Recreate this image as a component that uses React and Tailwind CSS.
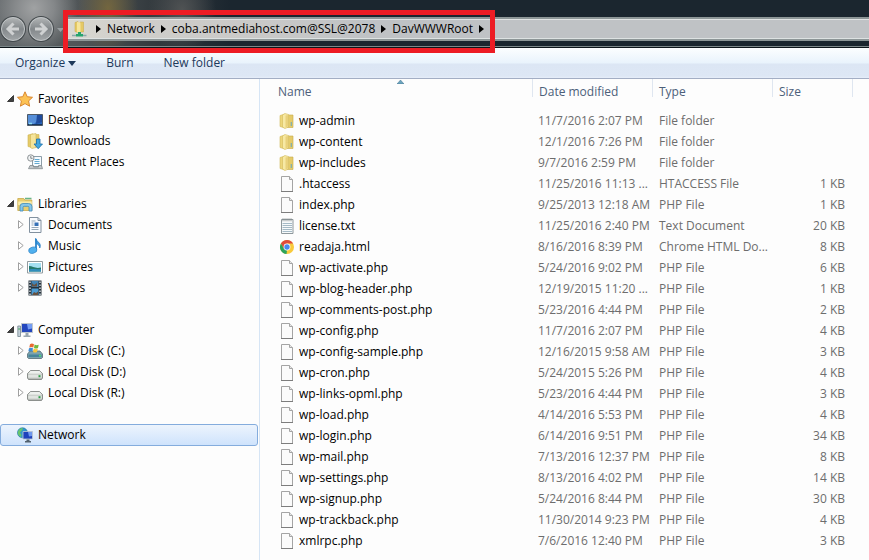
import { useState } from 'react';

const FILES = [
  { name: 'wp-admin', icon: 'folder', date: '11/7/2016 2:07 PM', type: 'File folder', size: '' },
  { name: 'wp-content', icon: 'folder', date: '12/1/2016 7:26 PM', type: 'File folder', size: '' },
  { name: 'wp-includes', icon: 'folder', date: '9/7/2016 2:59 PM', type: 'File folder', size: '' },
  { name: '.htaccess', icon: 'file', date: '11/25/2016 11:13 ...', type: 'HTACCESS File', size: '1 KB' },
  { name: 'index.php', icon: 'file', date: '9/25/2013 12:18 AM', type: 'PHP File', size: '1 KB' },
  { name: 'license.txt', icon: 'text', date: '11/25/2016 2:40 PM', type: 'Text Document', size: '20 KB' },
  { name: 'readaja.html', icon: 'chrome', date: '8/16/2016 8:39 PM', type: 'Chrome HTML Do...', size: '8 KB' },
  { name: 'wp-activate.php', icon: 'file', date: '5/24/2016 9:02 PM', type: 'PHP File', size: '6 KB' },
  { name: 'wp-blog-header.php', icon: 'file', date: '12/19/2015 11:20 ...', type: 'PHP File', size: '1 KB' },
  { name: 'wp-comments-post.php', icon: 'file', date: '5/23/2016 4:44 PM', type: 'PHP File', size: '2 KB' },
  { name: 'wp-config.php', icon: 'file', date: '11/7/2016 2:07 PM', type: 'PHP File', size: '4 KB' },
  { name: 'wp-config-sample.php', icon: 'file', date: '12/16/2015 9:58 AM', type: 'PHP File', size: '3 KB' },
  { name: 'wp-cron.php', icon: 'file', date: '5/24/2015 5:26 PM', type: 'PHP File', size: '4 KB' },
  { name: 'wp-links-opml.php', icon: 'file', date: '5/23/2016 4:44 PM', type: 'PHP File', size: '3 KB' },
  { name: 'wp-load.php', icon: 'file', date: '4/14/2016 5:53 PM', type: 'PHP File', size: '4 KB' },
  { name: 'wp-login.php', icon: 'file', date: '6/14/2016 9:51 PM', type: 'PHP File', size: '34 KB' },
  { name: 'wp-mail.php', icon: 'file', date: '7/13/2016 12:37 PM', type: 'PHP File', size: '8 KB' },
  { name: 'wp-settings.php', icon: 'file', date: '8/13/2016 4:02 PM', type: 'PHP File', size: '14 KB' },
  { name: 'wp-signup.php', icon: 'file', date: '5/24/2016 8:44 PM', type: 'PHP File', size: '30 KB' },
  { name: 'wp-trackback.php', icon: 'file', date: '11/30/2014 9:23 PM', type: 'PHP File', size: '4 KB' },
  { name: 'xmlrpc.php', icon: 'file', date: '7/6/2016 12:40 PM', type: 'PHP File', size: '3 KB' },
];

const TREE = [
  {
    label: 'Favorites',
    icon: 'star',
    children: [
      { label: 'Desktop', icon: 'desktop' },
      { label: 'Downloads', icon: 'downloads' },
      { label: 'Recent Places', icon: 'recent' },
    ],
  },
  {
    label: 'Libraries',
    icon: 'libraries',
    children: [
      { label: 'Documents', icon: 'documents', arrow: true },
      { label: 'Music', icon: 'music', arrow: true },
      { label: 'Pictures', icon: 'pictures', arrow: true },
      { label: 'Videos', icon: 'videos', arrow: true },
    ],
  },
  {
    label: 'Computer',
    icon: 'computer',
    children: [
      { label: 'Local Disk (C:)', icon: 'system', arrow: true },
      { label: 'Local Disk (D:)', icon: 'disk', arrow: true },
      { label: 'Local Disk (R:)', icon: 'disk', arrow: true },
    ],
  },
];

const CRUMBS = ['Network', 'coba.antmediahost.com@SSL@2078', 'DavWWWRoot'];

export default function App() {
  const [selected, setSelected] = useState('Network');

  return (
    <div className="flex flex-col min-h-screen bg-[#fdfdfd] font-['Open_Sans','Noto_Sans',sans-serif] text-xs text-black">
      <AddressBar />

      {/* Command bar */}
      <div className="flex items-center h-[31px] pl-[15px] gap-[30px] text-[#1e395b] border-b border-[#a3aec4] bg-[linear-gradient(#fcfeff_0px,#e9f3fc_15px,#dce6f4_16px,#dde7f5_28px,#e6eef9_30px)]">
        <button type="button" className="flex items-center gap-[3px]">
          Organize
          <svg className="w-2 h-[5px]" viewBox="0 0 8 5"><path d="M0 0h8L4 5z" fill="#1e395b" /></svg>
        </button>
        <button type="button">Burn</button>
        <button type="button">New folder</button>
      </div>

      <div className="flex flex-1">
        {/* Navigation pane */}
        <nav className="flex flex-col gap-[21px] w-[260px] shrink-0 pt-[9px] border-r border-[#d6e5f5]">
          {TREE.map(group => (
            <div key={group.label}>
              <button type="button" className="flex items-center w-full h-[21px] pl-[7px]">
                <svg className="w-[7px] h-[7px] mr-[3px]" viewBox="0 0 7 7"><path d="M6.5.5v6H.5z" fill="#404040" stroke="#222" strokeWidth=".8" /></svg>
                <Icon name={group.icon} />
                <span className="ml-[5px]">{group.label}</span>
              </button>
              {group.children.map(item => (
                <button key={item.label} type="button" className="flex items-center w-full h-[21px] pl-[18px]">
                  <span className="w-[9px]">
                    {item.arrow && (
                      <svg className="w-[6px] h-[9px]" viewBox="0 0 6 9"><path d="M.5.7v7.6L5.2 4.5z" fill="#fff" stroke="#a0a0a0" /></svg>
                    )}
                  </span>
                  <Icon name={item.icon} />
                  <span className="ml-[5px]">{item.label}</span>
                </button>
              ))}
            </div>
          ))}
          <button
            type="button"
            onClick={() => setSelected('Network')}
            className={`flex items-center h-[22px] mr-px pl-4 rounded-[3px] border ${
              selected === 'Network' ? 'border-[#84acdd] bg-linear-to-b from-[#edf4fd] to-[#cfe3fc]' : 'border-transparent'
            }`}
          >
            <Icon name="network" />
            <span className="ml-[5px]">Network</span>
          </button>
        </nav>

        {/* File list */}
        <main className="flex-1 min-w-0">
          <table className="w-full table-fixed border-collapse text-left whitespace-nowrap">
            <colgroup>
              <col />
              <col className="w-[120px]" />
              <col className="w-[120px]" />
              <col className="w-[80px]" />
              <col className="w-4" />
            </colgroup>
            <thead>
              <tr className="h-[31px] text-[#4c607a] align-top">
                <HeadCell label="Name" className="pl-[18px]" sorted />
                <HeadCell label="Date modified" className="pl-[6px]" />
                <HeadCell label="Type" className="pl-[6px]" />
                <HeadCell label="Size" className="pl-[6px]" />
                <td />
              </tr>
            </thead>
            <tbody>
              {FILES.map(file => (
                <tr key={file.name} className="h-[21px] text-[#6d6d6d]">
                  <td className="p-0 pl-[19px]">
                    <div className="flex items-center gap-1 text-black">
                      <Icon name={file.icon} />
                      {file.name}
                    </div>
                  </td>
                  <td className="p-0 pl-[5px]">{file.date}</td>
                  <td className="p-0 pl-[6px]">{file.type}</td>
                  <td className="p-0 pr-2 text-right">{file.size}</td>
                  <td />
                </tr>
              ))}
            </tbody>
          </table>
        </main>
      </div>
    </div>
  );
}

function AddressBar() {
  return (
    <header className="h-12 pl-px pt-[17px] flex items-start bg-[#1b262f] bg-[radial-gradient(ellipse_44px_44px_at_34px_8px,#a0a2a3_0%,#85888a_45%,transparent_100%),radial-gradient(ellipse_30px_44px_at_108px_8px,#73663f_0%,transparent_100%),radial-gradient(ellipse_34px_44px_at_182px_10px,#505354_0%,transparent_100%),linear-gradient(90deg,#62676a_0px,#505557_80px,#343b3f_150px,#1b262f_230px)] border-b border-[#0d151b] shadow-[inset_0_-1px_#7c8789]">
      <NavButton label="Back" d="M9.500 3.500 4 9l5.500 5.500M4.500 9H15" />
      <div className="w-1" />
      <NavButton label="Forward" d="M8.500 3.500 14 9l-5.500 5.500M13.500 9H3" />
      <svg className="w-[7px] h-[4px] ml-[4px] mt-[11px]" viewBox="0 0 7 4"><path d="M0 0h7L3.500 4z" fill="#999fa2" /></svg>
      <div className="relative flex-1 ml-[4px]">
        <div className="flex items-center h-6 pl-[3px] border-y-2 border-[#8d9697] bg-[linear-gradient(90deg,#dad9d2_0px,#cfceca_60px,#c9c9c8_200px,#bfc2c5_300px)] shadow-[inset_0_1px_#e0e3e3,inset_0_-1px_#dde2e2]">
          <span className="mr-[3px]">
            <Icon name="share" />
          </span>
          {CRUMBS.map(crumb => (
            <div key={crumb} className="flex items-center">
              <CrumbArrow />
              <button type="button">{crumb}</button>
            </div>
          ))}
          <CrumbArrow />
        </div>
        {/* Callout around the path */}
        <div className="absolute -left-[5px] -top-[7px] w-[432px] h-[43px] border-[5px] border-[#ed1c24] pointer-events-none" />
      </div>
    </header>
  );
}

function CrumbArrow() {
  return (
    <svg className="w-[5px] h-2 mx-[6px]" viewBox="0 0 5 8"><path d="M0 0v8l5-4z" fill="#000" /></svg>
  );
}

function NavButton({ label, d }) {
  return (
    <button type="button" aria-label={label} className="w-6 h-6 rounded-full border border-[#c2c6c8] bg-linear-to-b from-[#b0b3b4] via-[#83888b] to-[#a0a4a6] shadow-[0_0_0_1px_#43494c]">
      <svg className="w-[22px] h-[22px] p-[2px]" viewBox="0 0 18 18" fill="none" stroke="#cfd1d2" strokeWidth="3"><path d={d} /></svg>
    </button>
  );
}

function HeadCell({ label, className, sorted }) {
  return (
    <th className={`relative p-0 font-normal ${className}`}>
      <div className="pt-[4px] leading-[18px] border-r border-[#dfe6f0] h-[18px]">{label}</div>
      {sorted && (
        <svg className="absolute left-1/2 top-[1px] w-[7px] h-[4px]" viewBox="0 0 7 4"><path d="M0 4h7L3.500 0z" fill="#6ba4bd" stroke="#3c6f8c" strokeWidth=".5" /></svg>
      )}
    </th>
  );
}

function Icon({ name }) {
  return (
    <svg className="block w-4 h-4 shrink-0" viewBox="0 0 16 16" fill="none" aria-hidden="true">
      {ICONS[name]}
    </svg>
  );
}

const ICONS = {
  folder: (
    <>
      <path d="M1 2.500 6 1v14l-5-1.500z" fill="#edd67b" stroke="#d2b957" strokeWidth=".6" />
      <path d="M9 2h5v12.500H8z" fill="#e5cb6a" stroke="#c6ab4b" strokeWidth=".6" />
      <path d="M3.500 2 6 .5l3.500 1V14L6 15.500 3.500 14z" fill="#f7e9a4" stroke="#d3ba5d" strokeWidth=".6" />
      <path d="M6.500 2.500v12l2.500-1V2z" fill="#e9d17b" />
      <path d="M12.300 9v4" stroke="#79aeb4" strokeWidth="1.200" />
    </>
  ),
  file: (
    <>
      <path d="M2.500.5h8l3 3v12h-11z" fill="#fbfbfb" stroke="#a4a4a4" />
      <path d="M10.500.5v3h3" fill="#e8e8e8" stroke="#a4a4a4" />
      <path d="M2 15.500h12" stroke="#7d7d7d" />
    </>
  ),
  text: (
    <>
      <path d="M2.500 1.500h11.500v14H2.500z" fill="#f7fafb" stroke="#8e989c" />
      <path d="M4 .3v3M6 .3v3M8 .3v3M10 .3v3M12 .3v3" stroke="#7d8588" strokeWidth=".8" />
      <path d="M3.500 5.500h9.500M3.500 7.500h9.500M3.500 9.500h9.500M3.500 11.500h9.500M3.500 13.500h9.500" stroke="#a5bac6" />
    </>
  ),
  chrome: (
    <>
      <circle cx="8" cy="8" r="7" fill="#f9ca3b" />
      <path d="M1.900 4.500A7 7 0 0 1 14.100 4.500H8L5 9.700z" fill="#df4b3b" />
      <path d="M1.900 4.500 5 9.700 8 11.500 7.500 15A7 7 0 0 1 1.900 4.500" fill="#2ca35b" />
      <circle cx="8" cy="8" r="3.400" fill="#fff" />
      <circle cx="8" cy="8" r="2.700" fill="#4989ed" />
    </>
  ),
  star: (
    <path d="m8 .8 2.200 4.900 5.300.6-3.900 3.600 1 5.300L8 12.600l-4.600 2.600 1-5.300L.5 6.300l5.300-.6z" fill="#fcc254" stroke="#d9862f" strokeLinejoin="round" />
  ),
  desktop: (
    <>
      <path d="M.5 2.500h15v11H.5z" fill="#2865ba" stroke="#4d5966" />
      <path d="M1 3h14v1.500L7 12H1z" fill="#568fd9" />
      <path d="M10 3h5v7L9 12z" fill="#204c9d" />
      <path d="M1 12.500h14" stroke="#17365f" />
      <path d="M2 11.500h3" stroke="#8ddcf0" strokeWidth="1.500" />
    </>
  ),
  downloads: (
    <>
      <path d="M1 2 6 .8v14L1 13.500zM8 1.500h4V14H8z" fill="#e6cb68" stroke="#cdb351" strokeWidth=".6" />
      <path d="M3.500 1.500 9 .5v14l-4 1-1.500-1z" fill="#f5e49a" stroke="#cfb658" strokeWidth=".6" />
      <path d="M9.500 6h3.500v5h2.500L11.200 15.700 7 11h2.500z" fill="#43a7df" stroke="#1a6da8" strokeWidth=".8" />
    </>
  ),
  recent: (
    <>
      <path d="M5.500 2.500h9v10h-9z" fill="#f5fbff" stroke="#8c9da8" />
      <path d="M7.500 5.500h5M7.500 7.500h5M7.500 9.500h5" stroke="#62a9d1" />
      <path d="m3 11.500-1.500 3.200h14l-1-3.200h-3v1.500h-5v-1.500z" fill="#c2c7ca" stroke="#838a8e" strokeWidth=".8" />
      <circle cx="3.800" cy="4" r="3.200" fill="#f1f3f4" stroke="#8d9295" />
      <path d="M3.800 2v2.300h1.800" stroke="#626b70" strokeWidth=".8" />
    </>
  ),
  libraries: (
    <>
      <path d="M.8 2.500h6l1 1.500h7v10.500H.8z" fill="#e9ce70" stroke="#c9a94a" strokeWidth=".8" />
      <path d="M8 2.500h6.500" stroke="#68b487" strokeWidth="1.500" />
      <path d="M1.200 5.500h13.500V9H1.200z" fill="#f9ecab" />
      <path d="M3 15V10.500Q3 7.500 6 7.500h5.500q3.500 0 3.500 3V15h-3v-3.500q0-1.200-1.200-1.200H7.200Q6 10.300 6 11.500V15z" fill="#86c7eb" stroke="#4089b6" strokeWidth=".8" />
    </>
  ),
  documents: (
    <>
      <path d="M2.500.5h8.500l3 3v12H2.500z" fill="#f9fcff" stroke="#82919f" />
      <path d="M11 .5v3h3" stroke="#82919f" />
      <path d="M4.500 4h4M4.500 6h2M4.500 8h2M4.500 10.500h7M4.500 12.500h7" stroke="#95a8b7" />
      <path d="M7.500 5.500h4v3.500h-4z" fill="#3571b6" />
    </>
  ),
  music: (
    <>
      <path d="M8.500.5c.5 3 6.500 4 4.300 9.500-.2-2.500-1.800-3.800-3.500-4.200z" fill="#3f9ee3" stroke="#2879bf" strokeWidth=".8" />
      <path d="M9 .8v11.500" stroke="#2b86cd" strokeWidth="1.800" />
      <ellipse cx="5.800" cy="12.200" rx="4.200" ry="3.100" fill="#50b0ee" stroke="#267bc0" strokeWidth=".6" transform="rotate(-15 5.800 12.200)" />
    </>
  ),
  pictures: (
    <>
      <path d="M.5 2.500h15v11.500H.5z" fill="#fff" stroke="#919b9f" />
      <path d="M2 4h12v8.500H2z" fill="#a4dff1" />
      <path d="M2 7c4 0 6 3 12 1.500v4H2z" fill="#24786b" />
      <path d="M2 10.500c4-.8 7 0 12-.5v2.500H2z" fill="#308dbb" />
    </>
  ),
  videos: (
    <>
      <path d="M1.500.5h13v15h-13z" fill="#26323b" />
      <path d="M4.500 1h7v6h-7z" fill="#4183b5" />
      <path d="M4.500 8.500h7v6.500h-7z" fill="#4b9bd3" />
      <path d="m5 3 2 2 3-2v3.500H5zM5 15l2-3 2 1 2-1.500V15z" fill="#68513f" />
      <path d="M3 1.500v14M13 1.500v14" stroke="#e7edf1" strokeWidth="1.300" strokeDasharray="1.500 1.500" />
    </>
  ),
  computer: (
    <>
      <path d="M.8 4h2.700v10.500H.8z" fill="#c4d0d8" stroke="#758692" strokeWidth=".8" />
      <path d="M1.200 7h2" stroke="#38a954" />
      <path d="M4.500 1.500h11v9h-11z" fill="#2346bd" stroke="#bdc5cc" />
      <path d="M10 2h5v4.500l-4 1z" fill="#739cf3" />
      <path d="M8.500 11h3v2.500h2V15h-7v-1.500h2z" fill="#99a7b1" />
    </>
  ),
  system: (
    <>
      <path d="M3 8h10l2.500 3v3.500l-1 1h-13l-1-1V11z" fill="#7ba2ae" stroke="#566c74" strokeWidth=".8" />
      <path d="M1.500 11.500h13v2.500h-13z" fill="#46849a" />
      <path d="M12 12h2v1.500h-2z" fill="#51de73" />
      <path d="M3 1.200Q5 0 7 1.300L6.300 4.500Q4.400 3.500 2.300 4.500z" fill="#ea6a30" />
      <path d="M7.600 1.600q2 1.200 4.100.2L11 5q-2 1-4 0z" fill="#72b83b" />
      <path d="M2 5.200q2-1 4 0l-.7 3.300q-2-1-4 0z" fill="#3d8dd7" />
      <path d="M6.700 5.600q2 1 4.100.2L10 9q-2 1-4 0z" fill="#f8c53a" />
    </>
  ),
  disk: (
    <>
      <path d="M3.500 6.500h9L15.500 9.500v4.500l-1 1.500h-13l-1-1.500V9.500z" fill="#b9bdb9" stroke="#777c78" strokeWidth=".8" />
      <path d="M3.500 7h9l2.500 2.800H1z" fill="#edf0ed" />
      <path d="M1.200 10.500h13.600v3.200H1.200z" fill="#e0e4e0" />
      <path d="M11.500 11.200h2v2h-2z" fill="#2f9b46" />
    </>
  ),
  network: (
    <>
      <circle cx="5.500" cy="5.800" r="5" fill="#3297cb" stroke="#1d719f" strokeWidth=".6" />
      <path d="M2 2.500Q5 0 6 1.500L4.500 4 3 5.500 4.500 8l-.5 2Q.5 8.500.8 5z" fill="#67c66c" />
      <path d="M6 4.500h9.500v7.500H6z" fill="#1f43bc" stroke="#c2cbd4" strokeWidth=".8" />
      <path d="M11 5h4v4l-3 .5z" fill="#6e98ee" />
      <path d="M9.500 12.500h3v1.500h1.500v1.500H8V14h1.500z" fill="#51616f" />
    </>
  ),
  share: (
    <>
      <path d="M4 1.500 7 .5v11l-3-1zM9 1h3.500v10H8z" fill="#e5c965" stroke="#c8a844" strokeWidth=".5" />
      <path d="m6 1 3.500.5v9.500L7 12l-1-1z" fill="#f7e59a" />
      <path d="M7 11h3v2h2v2.500H5V13h2z" fill="#27a56c" />
      <path d="M1 14.500h4M12 14.500h3.500" stroke="#88a8ac" strokeWidth="1.500" />
    </>
  ),
};
